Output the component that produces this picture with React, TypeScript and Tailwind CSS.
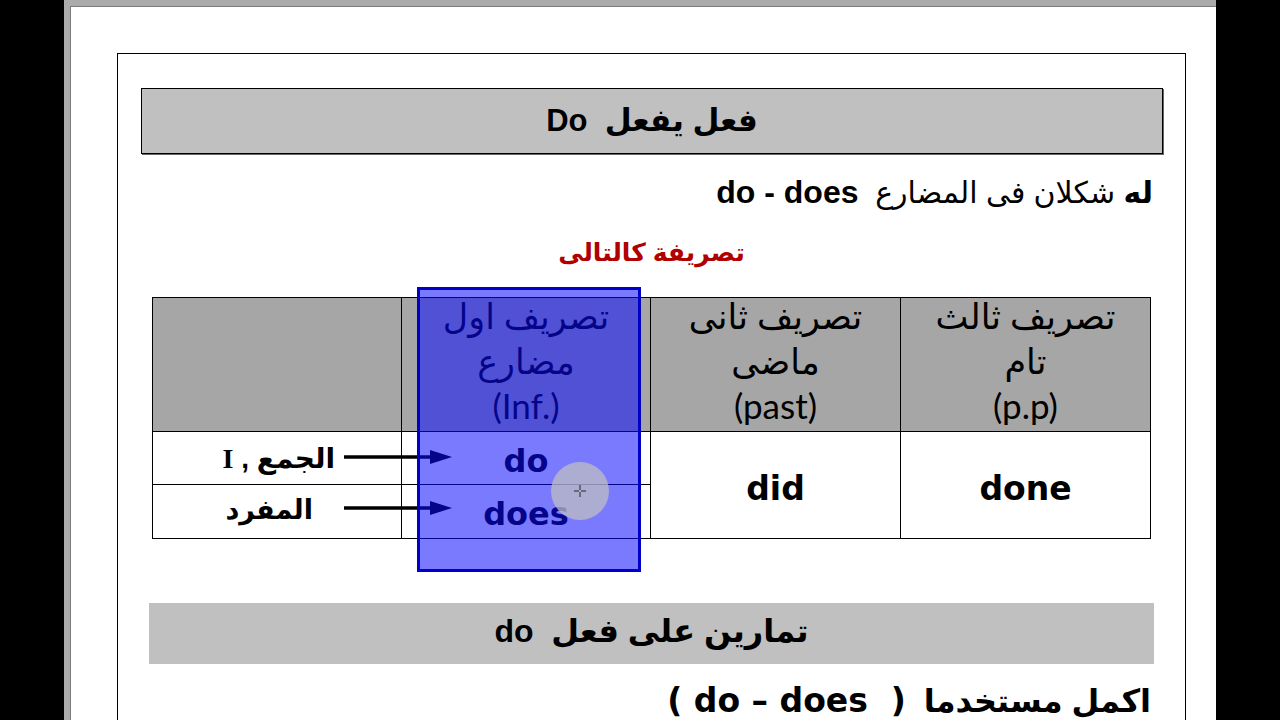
import React from "react";

const AR = "font-['Liberation_Sans','DejaVu_Sans',sans-serif]";
const COMIC = "font-['DejaVu_Sans',sans-serif] font-bold";
const CAL = "font-['Lato','DejaVu_Sans',sans-serif]";

function Arrow({ y }: { y: number }) {
	return (
		<g>
			<line x1="0" y1={y} x2="90" y2={y} stroke="#000" strokeWidth="3.5" />
			<polygon points={`86,${y - 7} 108,${y} 86,${y + 7}`} fill="#000" />
		</g>
	);
}

function VerbTable() {
	return (
		<div className="relative ml-[34px] mt-[25px] w-[999px] border border-black">
			<div className="flex h-[134px] border-b border-black bg-[#a6a6a6]">
				<div className="w-[249px] border-r border-black" />
				{[
					["تصريف اول", "مضارع", "(Inf.)"],
					["تصريف ثانى", "ماضى", "(past)"],
					["تصريف ثالث", "تام", "(p.p)"],
				].map((lines, i) => (
					<div
						key={i}
						className={`flex flex-col items-center text-[35px] leading-[45px] text-black ${CAL} ${i === 1 ? "w-[250px]" : "w-[249px]"} ${i < 2 ? "border-r border-black" : ""}`}
					>
						<div className="-mt-[5px] flex flex-col items-center">
							{lines.map((l) => (
								<span key={l} dir={l.startsWith("(") ? "ltr" : "rtl"}>
									{l}
								</span>
							))}
						</div>
					</div>
				))}
			</div>
			<div className="flex h-[106px]">
				<div className="flex w-[249px] flex-col border-r border-black">
					<div
						dir="rtl"
						className={`h-[53px] border-b border-black pr-[66px] text-[28px] font-bold leading-[53px] ${AR}`}
					>
						الجمع , <span className="font-['Liberation_Serif',serif]">I</span>
					</div>
					<div
						dir="rtl"
						className={`h-[52px] pr-[88px] text-[27px] font-bold leading-[50px] ${AR}`}
					>
						المفرد
					</div>
				</div>
				<div className="flex w-[249px] flex-col border-r border-black">
					<div className={`h-[53px] border-b border-black text-center text-[32px] leading-[58px] ${COMIC}`}>
						do
					</div>
					<div className={`h-[52px] text-center text-[32px] leading-[58px] ${COMIC}`}>
						does
					</div>
				</div>
				<div className={`flex w-[250px] items-center justify-center border-r border-black pt-[8px] text-[33px] ${COMIC}`}>
					did
				</div>
				<div className={`flex w-[249px] items-center justify-center pt-[8px] text-[33px] ${COMIC}`}>
					done
				</div>
			</div>

			<svg
				className="absolute left-[191px] top-[150px]"
				width="112"
				height="70"
				viewBox="0 0 112 70"
			>
				<Arrow y={9} />
				<Arrow y={60} />
			</svg>

			{/* highlight over first column */}
			<div className="absolute left-[264px] top-[-11px] h-[285px] w-[224px] border-[3px] border-[#0000c8] bg-[rgba(10,10,255,0.54)]" />

			{/* pointer */}
			<div className="absolute left-[398px] top-[164px] h-[58px] w-[58px] rounded-full bg-[rgba(192,192,192,0.72)]" />
			<svg className="absolute left-[421px] top-[187px]" width="12" height="12" viewBox="0 0 12 12">
				<path d="M6 0v5M6 7v5M0 6h5M7 6h5" stroke="#222" strokeWidth="1" />
			</svg>
		</div>
	);
}

export default function App() {
	return (
		<div className="flex h-[720px] w-[1280px] overflow-hidden bg-black">
			<div className="ml-[64px] h-full w-[1152px] bg-[#ababab] pl-[6px] pt-[6px]">
				<div className="h-full border-l border-t border-[#7a7a7a] bg-white pl-[46px] pt-[46px]">
					<div className="h-[700px] w-[1069px] border border-black">
						<div
							dir="rtl"
							className={`ml-[23px] mt-[34px] flex h-[66px] w-[1022px] items-center justify-center border border-black bg-[#c0c0c0] text-[31px] font-bold text-black shadow-[1px_1px_0_#666] ${AR}`}
						>
							فعل يفعل&nbsp; Do
						</div>

						<div
							dir="rtl"
							className={`mt-[18px] h-[40px] pr-[32px] text-[30px] leading-[40px] text-black ${AR}`}
						>
							<span className="font-bold">له</span> شكلان فى المضارع&nbsp;{" "}
							<span className="text-[32px] font-bold" dir="ltr">
								do - does
							</span>
						</div>

						<div
							dir="rtl"
							className={`mt-[20px] h-[40px] text-center text-[25px] font-bold leading-[40px] text-[#b00000] ${AR}`}
						>
							تصريفة كالتالى
						</div>

						<VerbTable />

						<div
							dir="rtl"
							className={`ml-[31px] mt-[64px] flex h-[61px] w-[1005px] items-center justify-center bg-[#c0c0c0] pb-[6px] text-[32px] font-bold text-black ${AR}`}
						>
							تمارين على فعل&nbsp; do
						</div>

						<div
							dir="rtl"
							className={`mt-[17px] h-[40px] whitespace-nowrap pr-[34px] text-[32px] font-bold leading-[40px] text-black ${AR}`}
						>
							اكمل مستخدما&nbsp;{" "}
							<span dir="ltr" className="font-['DejaVu_Sans',sans-serif] text-[33px]">
								(&nbsp;do – does&nbsp;&nbsp;)
							</span>
						</div>
					</div>
				</div>
			</div>
		</div>
	);
}
